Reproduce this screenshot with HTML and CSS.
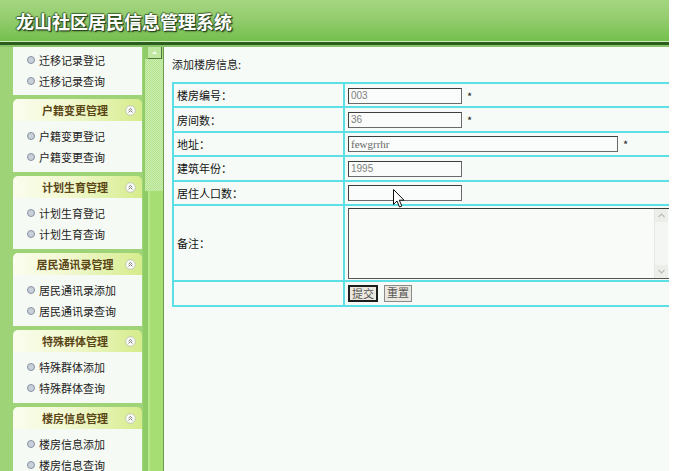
FILE: index.html
```html
<!DOCTYPE html>
<html lang="zh-CN">
<head>
<meta charset="utf-8">
<title>龙山社区居民信息管理系统</title>
<link rel="stylesheet" href="styles.css">
</head>
<body>
<div class="page">
  <header class="top">
    <h1 class="title">龙山社区居民信息管理系统</h1>
  </header>
  <div class="rule"></div>
  <div class="main">
    <aside class="sidebar">
      <div class="group">
        <ul class="group-body first">
          <li>迁移记录登记</li>
          <li>迁移记录查询</li>
        </ul>
      </div>
      <div class="group">
        <div class="group-head"><span class="head-text">户籍变更管理</span><svg class="toggle" viewBox="0 0 11 11"><circle cx="5.5" cy="5.5" r="4.8" fill="#fbfbf8" stroke="#b9bdb0" stroke-width="0.8"/><path d="M3.6 5.2 L5.5 3.4 L7.4 5.2 M3.6 7.4 L5.5 5.6 L7.4 7.4" fill="none" stroke="#6a6a6a" stroke-width="0.9"/></svg></div>
        <ul class="group-body">
          <li>户籍变更登记</li>
          <li>户籍变更查询</li>
        </ul>
      </div>
      <div class="group">
        <div class="group-head"><span class="head-text">计划生育管理</span><svg class="toggle" viewBox="0 0 11 11"><circle cx="5.5" cy="5.5" r="4.8" fill="#fbfbf8" stroke="#b9bdb0" stroke-width="0.8"/><path d="M3.6 5.2 L5.5 3.4 L7.4 5.2 M3.6 7.4 L5.5 5.6 L7.4 7.4" fill="none" stroke="#6a6a6a" stroke-width="0.9"/></svg></div>
        <ul class="group-body">
          <li>计划生育登记</li>
          <li>计划生育查询</li>
        </ul>
      </div>
      <div class="group">
        <div class="group-head"><span class="head-text">居民通讯录管理</span><svg class="toggle" viewBox="0 0 11 11"><circle cx="5.5" cy="5.5" r="4.8" fill="#fbfbf8" stroke="#b9bdb0" stroke-width="0.8"/><path d="M3.6 5.2 L5.5 3.4 L7.4 5.2 M3.6 7.4 L5.5 5.6 L7.4 7.4" fill="none" stroke="#6a6a6a" stroke-width="0.9"/></svg></div>
        <ul class="group-body">
          <li>居民通讯录添加</li>
          <li>居民通讯录查询</li>
        </ul>
      </div>
      <div class="group">
        <div class="group-head"><span class="head-text">特殊群体管理</span><svg class="toggle" viewBox="0 0 11 11"><circle cx="5.5" cy="5.5" r="4.8" fill="#fbfbf8" stroke="#b9bdb0" stroke-width="0.8"/><path d="M3.6 5.2 L5.5 3.4 L7.4 5.2 M3.6 7.4 L5.5 5.6 L7.4 7.4" fill="none" stroke="#6a6a6a" stroke-width="0.9"/></svg></div>
        <ul class="group-body">
          <li>特殊群体添加</li>
          <li>特殊群体查询</li>
        </ul>
      </div>
      <div class="group">
        <div class="group-head"><span class="head-text">楼房信息管理</span><svg class="toggle" viewBox="0 0 11 11"><circle cx="5.5" cy="5.5" r="4.8" fill="#fbfbf8" stroke="#b9bdb0" stroke-width="0.8"/><path d="M3.6 5.2 L5.5 3.4 L7.4 5.2 M3.6 7.4 L5.5 5.6 L7.4 7.4" fill="none" stroke="#6a6a6a" stroke-width="0.9"/></svg></div>
        <ul class="group-body">
          <li>楼房信息添加</li>
          <li>楼房信息查询</li>
        </ul>
      </div>
    </aside>
    <div class="splitter">
      <div class="split-btn"><svg viewBox="0 0 14 11" width="14" height="11"><path d="M4 7 L7 4 L10 7 Z" fill="#f2fbe9"/></svg></div>
      <div class="track"></div>
    </div>
    <main class="content">
      <p class="caption">添加楼房信息:</p>
      <table class="form">
        <tr>
          <td class="label">楼房编号：</td>
          <td class="value"><span class="field w-short">003</span><span class="star">*</span></td>
        </tr>
        <tr>
          <td class="label">房间数：</td>
          <td class="value"><span class="field w-short">36</span><span class="star">*</span></td>
        </tr>
        <tr>
          <td class="label">地址：</td>
          <td class="value"><span class="field w-long serif">fewgrrhr</span><span class="star">*</span></td>
        </tr>
        <tr>
          <td class="label">建筑年份：</td>
          <td class="value"><span class="field w-short">1995</span></td>
        </tr>
        <tr>
          <td class="label">居住人口数：</td>
          <td class="value"><span class="field w-short"></span></td>
        </tr>
        <tr class="tall">
          <td class="label">备注：</td>
          <td class="value">
            <div class="memo">
              <div class="memo-text"></div>
              <div class="vscroll">
                <svg viewBox="0 0 13 13" width="13" height="13"><path d="M3.5 8 L6.5 5 L9.5 8" fill="none" stroke="#b8bcb8" stroke-width="1.1"/></svg>
                <svg viewBox="0 0 13 13" width="13" height="13"><path d="M3.5 5 L6.5 8 L9.5 5" fill="none" stroke="#b8bcb8" stroke-width="1.1"/></svg>
              </div>
            </div>
          </td>
        </tr>
        <tr>
          <td class="label"></td>
          <td class="value"><div class="buttons"><span class="btn primary">提交</span><span class="btn">重置</span></div></td>
        </tr>
      </table>
      <svg class="cursor" viewBox="0 0 12 19" width="12" height="19"><path d="M0.5 0.5 L0.5 15.5 L4 12 L6.5 18 L8.8 17 L6.3 11.2 L11 11.2 Z" fill="#fff" stroke="#111" stroke-width="1" stroke-linejoin="round"/></svg>
    </main>
  </div>
</div>
</body>
</html>
```
FILE: styles.css
```css
* { box-sizing: border-box; }
html, body { margin: 0; padding: 0; background: #ffffff; }
body {
  font-family: "Noto Sans CJK SC", "Liberation Sans", sans-serif;
  font-size: 11px;
  color: #222;
}
.page {
  width: 669px;
  height: 471px;
  overflow: hidden;
  display: flex;
  flex-direction: column;
}
.top {
  height: 41px;
  flex: none;
  display: flex;
  align-items: center;
  padding-left: 16px;
  background: linear-gradient(#a4d680, #94cd6e 45%, #74bf4e);
}
.title {
  margin: 0;
  font-size: 18px;
  line-height: 1;
  font-weight: 700;
  color: #ffffff;
  text-shadow: 1px 1px 0 #2c4a20, -1px 0 1px #41662f, 0 -1px 1px #41662f, 1px 1px 2px #1e3516;
}
.rule {
  height: 6px;
  flex: none;
  background: linear-gradient(#cce9b8 0 1px, #2b5d1c 1px 4px, #88c36a 4px);
}
.main { flex: 1; display: flex; min-height: 0; }

/* sidebar */
.sidebar {
  width: 143px;
  flex: none;
  padding-left: 13px;
  background: #9ed477;
}
.group { width: 129px; margin-bottom: 4px; }
.group-head {
  height: 22px;
  display: grid;
  align-items: center;
  border-radius: 5px 5px 0 0;
  background: linear-gradient(to right, #fbfdee, #f1f8cf 45%, #d5ec8b);
}
.group-head > * { grid-area: 1 / 1; }
.head-text {
  text-align: center;
  font-weight: bold;
  color: #5a4515;
  padding-right: 5px;
  line-height: 14px;
}
.toggle { justify-self: end; margin-right: 6px; width: 11px; height: 11px; display: block; }
.group-body {
  margin: 0;
  padding: 4px 0 5px;
  list-style: none;
  background: #f6faf5;
}
.group-body.first { padding: 2px 0 4px; }
.group-body li {
  height: 21px;
  line-height: 14px;
  display: flex;
  align-items: center;
  gap: 4px;
  padding-left: 14px;
  color: #222;
}
.group-body li::before {
  content: "";
  width: 6px;
  height: 6px;
  border-radius: 50%;
  background: #c9d0da;
  border: 1px solid #8792a3;
  flex: none;
}

/* splitter */
.splitter {
  width: 21px;
  flex: none;
  display: flex;
  flex-direction: column;
  border-right: 1px solid #6b9a50;
  background: linear-gradient(to right, #8fcb67 0 5px, #b6e788 5px 7px, #a7de74 7px);
}
.split-btn {
  height: 12px;
  margin-left: 5px;
  margin-right: 1px;
  background: #bfe7a0;
  border-right: 1px solid #4d7a3c;
  border-bottom: 1px solid #4d7a3c;
  display: flex;
  align-items: center;
  justify-content: center;
}
.track {
  height: 132px;
  margin-left: 2px;
  background: repeating-conic-gradient(#cfeeb6 0 25%, #b2e38b 0 50%) 0 0 / 2px 2px;
}

/* content */
.content {
  flex: 1;
  position: relative;
  padding: 10px 0 0 8px;
  background: #f6fbf7;
  overflow: hidden;
}
.caption { margin: 0 0 11px; line-height: 14px; color: #222; }
.form {
  width: 540px;
  border-collapse: separate;
  border-spacing: 0;
  border: 1px solid #5ce0e6;
  table-layout: fixed;
}
.form td {
  border: 1px solid #5ce0e6;
  height: 24.4px;
  padding: 0 3px;
  vertical-align: middle;
  color: #111;
  line-height: 14px;
}
.form td.label { width: 171px; }
.form tr.tall td { height: 76.5px; }
.field {
  display: inline-block;
  vertical-align: middle;
  height: 16px;
  line-height: 14px;
  padding: 0 2px;
  border: 1px solid #6a6a6a;
  border-top-color: #3e3e3e;
  border-left-color: #3e3e3e;
  background: #f9fcfa;
  color: #808080;
  font-family: "Liberation Sans", sans-serif;
  font-size: 10px;
}
.field.serif { font-family: "Liberation Serif", serif; font-size: 11px; color: #6a6a6a; }
.w-short { width: 114px; }
.w-long { width: 270px; }
.star { margin-left: 5px; vertical-align: middle; font-size: 11px; color: #222; }
.memo {
  width: 330px;
  height: 71px;
  display: flex;
  border: 1px solid #555;
  border-top-color: #3a3a3a;
  background: #f8fbf8;
}
.memo-text { flex: 1; }
.vscroll {
  width: 14px;
  margin-right: 9px;
  border-left: 1px solid #e4e7e3;
  background: #f3f6f2;
  display: flex;
  flex-direction: column;
  justify-content: space-between;
}
.vscroll svg { display: block; background: #eceeea; }
.buttons { display: flex; gap: 6px; }
.btn {
  height: 17px;
  line-height: 13px;
  padding: 0 2px;
  background: #ebe8e0;
  border: 1px solid #8a8a8a;
  color: #555;
  font-size: 11px;
}
.btn.primary { border: 2px solid #1e1e1e; padding: 0 2px; line-height: 13px; }
.cursor { position: absolute; left: 229px; top: 142px; }
```
